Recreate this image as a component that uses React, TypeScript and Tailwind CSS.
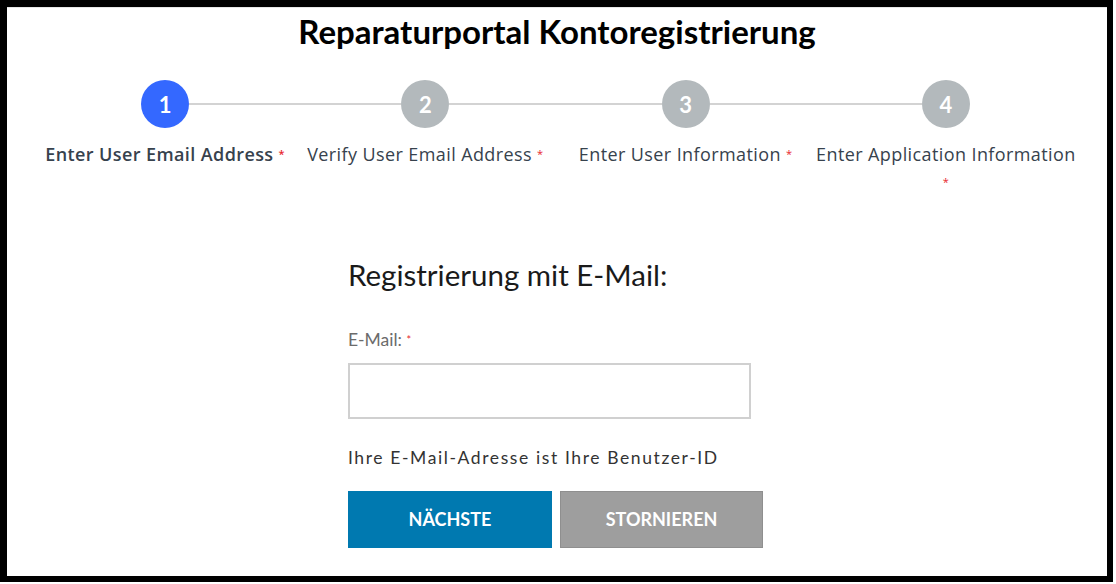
const steps = [
  { n: 1, label: "Enter User Email Address", active: true },
  { n: 2, label: "Verify User Email Address", active: false },
  { n: 3, label: "Enter User Information", active: false },
  { n: 4, label: "Enter Application Information", active: false },
];

const Req = () => <span className="text-[#e8262d] text-[11px] align-top">*</span>;

const App = () => {
  return (
    <div className="w-[1116px] h-[584px] bg-white font-['Lato','Liberation_Sans',sans-serif]">
      <div className="w-[1113px] h-[582px] border-black border-l-[7px] border-t-[7px] border-r-[6px] border-b-[6px] bg-white">
        <div className="h-full border-t border-[#e6e6e6]">
          {/* Title */}
          <h1 className="text-center text-[33px] leading-[40px] font-bold text-black pt-[3px]">
            Reparaturportal Kontoregistrierung
          </h1>

          {/* Stepper */}
          <div className="grid grid-cols-4 w-[1041px] ml-[28px] mt-[29px]">
            {steps.map((s, i) => (
              <div key={s.n} className="flex flex-col items-center">
                <div className="flex items-center w-full">
                  <div className={`flex-1 h-[2px] ${i === 0 ? "bg-transparent" : "bg-[#d3d3d3]"}`} />
                  <div
                    className={`w-[48px] h-[48px] rounded-full flex items-center justify-center text-white text-[22px] font-bold ${
                      s.active ? "bg-[#3468ff]" : "bg-[#b3b9bc]"
                    }`}
                  >
                    {s.n}
                  </div>
                  <div className={`flex-1 h-[2px] ${i === steps.length - 1 ? "bg-transparent" : "bg-[#d3d3d3]"}`} />
                </div>
                <p
                  className={`mt-[12px] text-center text-[18px] leading-[28px] tracking-[0.4px] text-[#37424d] font-['Open_Sans',sans-serif] ${
                    s.active ? "font-semibold" : ""
                  }`}
                >
                  <span className="whitespace-nowrap">{s.label}</span>
                  {i === steps.length - 1 ? <br /> : " "}
                  <Req />
                </p>
              </div>
            ))}
          </div>

          {/* Form */}
          <div className="w-[415px] ml-[341px] mt-[59px]">
            <h2 className="text-[29.5px] leading-[40px] text-[#1a1a1a]">Registrierung mit E-Mail:</h2>
            <label className="block mt-[35px] text-[17.5px] leading-[20px] text-[#6b6b6b]">
              E-Mail: <Req />
            </label>
            <input
              type="email"
              className="block mt-[13px] w-[403px] h-[56px] border-2 border-[#d0d0d0] bg-white px-3 outline-none"
            />
            <p className="mt-[27px] text-[17.5px] leading-[24px] tracking-[1.6px] text-[#333333]">
              Ihre E-Mail-Adresse ist Ihre Benutzer-ID
            </p>
            <div className="flex gap-[8px] mt-[21px]">
              <button className="w-[204px] h-[57px] bg-[#0079b0] text-white text-[18px] font-bold uppercase">
                Nächste
              </button>
              <button className="w-[203px] h-[57px] bg-[#9e9e9e] border border-[#8f8f8f] text-white text-[18px] font-bold uppercase">
                Stornieren
              </button>
            </div>
          </div>
        </div>
      </div>
    </div>
  );
};

export default App;
